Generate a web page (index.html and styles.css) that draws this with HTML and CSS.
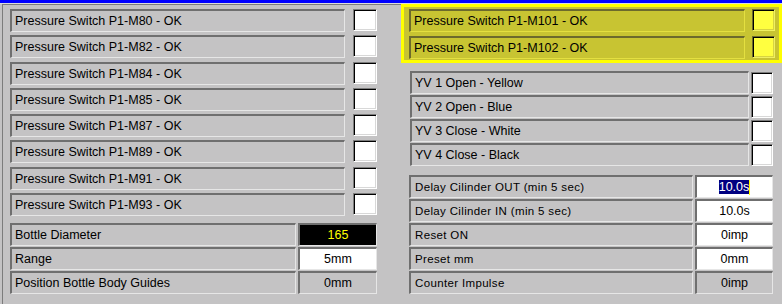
FILE: index.html
```html
<!DOCTYPE html>
<html>
<head>
  <title>Panel Presostatos</title>
  <link rel="stylesheet" href="styles.css">
</head>
<body>
  <div class="topbar"></div>
  <div class="frame">
    <!-- Columna izquierda: presostatos y botella -->
    <div class="left">
      <div class="row"><div class="label">Pressure Switch P1-M80 - OK</div><div class="check"></div></div>
      <div class="row"><div class="label">Pressure Switch P1-M82 - OK</div><div class="check"></div></div>
      <div class="row"><div class="label">Pressure Switch P1-M84 - OK</div><div class="check"></div></div>
      <div class="row"><div class="label">Pressure Switch P1-M85 - OK</div><div class="check"></div></div>
      <div class="row"><div class="label">Pressure Switch P1-M87 - OK</div><div class="check"></div></div>
      <div class="row"><div class="label">Pressure Switch P1-M89 - OK</div><div class="check"></div></div>
      <div class="row"><div class="label">Pressure Switch P1-M91 - OK</div><div class="check"></div></div>
      <div class="row"><div class="label">Pressure Switch P1-M93 - OK</div><div class="check"></div></div>

      <div class="params">
        <div class="prow"><div class="label">Bottle Diameter</div><div class="value dark">165</div></div>
        <div class="prow"><div class="label">Range</div><div class="value white">5mm</div></div>
        <div class="prow"><div class="label">Position Bottle Body Guides</div><div class="value">0mm</div></div>
      </div>
    </div>

    <!-- Columna derecha -->
    <div class="right">
      <div class="highlight">
        <div class="hrow"><div class="label">Pressure Switch P1-M101 - OK</div><div class="check yellow"></div></div>
        <div class="hrow"><div class="label">Pressure Switch P1-M102 - OK</div><div class="check yellow"></div></div>
      </div>

      <div class="valves">
        <div class="vrow"><div class="label">YV 1 Open - Yellow</div><div class="check"></div></div>
        <div class="vrow"><div class="label">YV 2 Open - Blue</div><div class="check"></div></div>
        <div class="vrow"><div class="label">YV 3 Close - White</div><div class="check"></div></div>
        <div class="vrow"><div class="label">YV 4 Close - Black</div><div class="check"></div></div>
      </div>

      <div class="settings">
        <div class="srow"><div class="label">Delay Cilinder OUT (min 5 sec)</div><div class="value white"><span class="sel">10.0s</span><span class="caret"></span></div></div>
        <div class="srow"><div class="label">Delay Cilinder IN (min 5 sec)</div><div class="value white">10.0s</div></div>
        <div class="srow"><div class="label">Reset ON</div><div class="value white">0imp</div></div>
        <div class="srow"><div class="label">Preset mm</div><div class="value white">0mm</div></div>
        <div class="srow"><div class="label">Counter Impulse</div><div class="value">0imp</div></div>
      </div>
    </div>
  </div>
</body>
</html>
```
FILE: styles.css
```css
body {
  margin: 0;
  width: 782px;
  height: 304px;
  overflow: hidden;
  background-color: #c4c3c4;
  font-family: 'Liberation Sans', Arial, sans-serif;
  font-size: 12.5px;
  color: #000;
}
.topbar {
  height: 3px;
  background: #0000ff;
  border-bottom: 1px solid #dcdcdc;
}
.frame {
  display: flex;
  margin-left: 2px;
  border-top: 1px solid #7c7c7c;
  border-left: 1px solid #7c7c7c;
  height: 300px;
}
.left {
  width: 391px;
  padding: 4px 0 0 7px;
  box-sizing: border-box;
}
.label {
  box-sizing: border-box;
  height: 23px;
  line-height: 20px;
  padding-left: 3px;
  white-space: nowrap;
  border-style: solid;
  border-width: 2px 1px 1px 2px;
  border-color: #6f6f6f #e6e6e6 #e6e6e6 #6f6f6f;
}
.check {
  box-sizing: border-box;
  width: 23px;
  height: 22px;
  background: #fff;
  border: 1px solid;
  border-color: #7c7c7c #fff #fff #7c7c7c;
  box-shadow: inset 1px 1px 0 #000, inset -1px -1px 0 #d8d8d8;
}
.row {
  display: flex;
  gap: 8px;
  height: 23px;
  margin-bottom: 3.3px;
}
.row .label {
  width: 335px;
}
.row .check {
  width: 24px;
}
.params {
  margin-top: 6.7px;
}
.prow, .srow {
  display: flex;
  gap: 2px;
  height: 23px;
  margin-bottom: 1px;
}
.prow .label {
  width: 286px;
}
.value {
  box-sizing: border-box;
  width: 79px;
  height: 23px;
  line-height: 20px;
  text-align: center;
  border-style: solid;
  border-width: 2px 1px 1px 2px;
  border-color: #6f6f6f #e6e6e6 #e6e6e6 #6f6f6f;
}
.value.white {
  background: #fff;
}
.value.dark {
  background: #000;
  color: #ffff00;
}
.right {
  width: 381px;
  margin-top: -1px;
  margin-left: 7px;
}
.highlight {
  border: 3px solid #ffff00;
  background: #c8c432;
  padding: 2px 0 1px 5px;
}
.hrow {
  display: flex;
  gap: 7px;
  height: 23px;
  margin-bottom: 4px;
}
.hrow:last-child {
  margin-bottom: 0;
}
.hrow .label {
  width: 336px;
  border-color: #6c6a2c #e4e040 #e4e040 #6c6a2c;
}
.check.yellow {
  background: #ffff40;
  border-color: #6c6a2c #f0f060 #f0f060 #6c6a2c;
  box-shadow: inset 1px 1px 0 #000, inset -1px -1px 0 #d8d440;
}
.valves {
  margin: 8px 0 0 9px;
}
.vrow {
  display: flex;
  gap: 2px;
  height: 23px;
  margin-bottom: 1px;
}
.vrow .label {
  width: 339px;
}
.vrow .check {
  width: 22px;
  margin-top: 1px;
}
.settings {
  margin: 9px 0 0 8px;
}
.srow .label {
  width: 284px;
  font-size: 11.5px;
  letter-spacing: 0.35px;
  padding-left: 4px;
}
.srow .value {
  width: 78px;
}
.sel {
  background: #000080;
  color: #fff;
}
.caret {
  display: inline-block;
  width: 1px;
  height: 15px;
  background: #ffff00;
  vertical-align: middle;
}
```
